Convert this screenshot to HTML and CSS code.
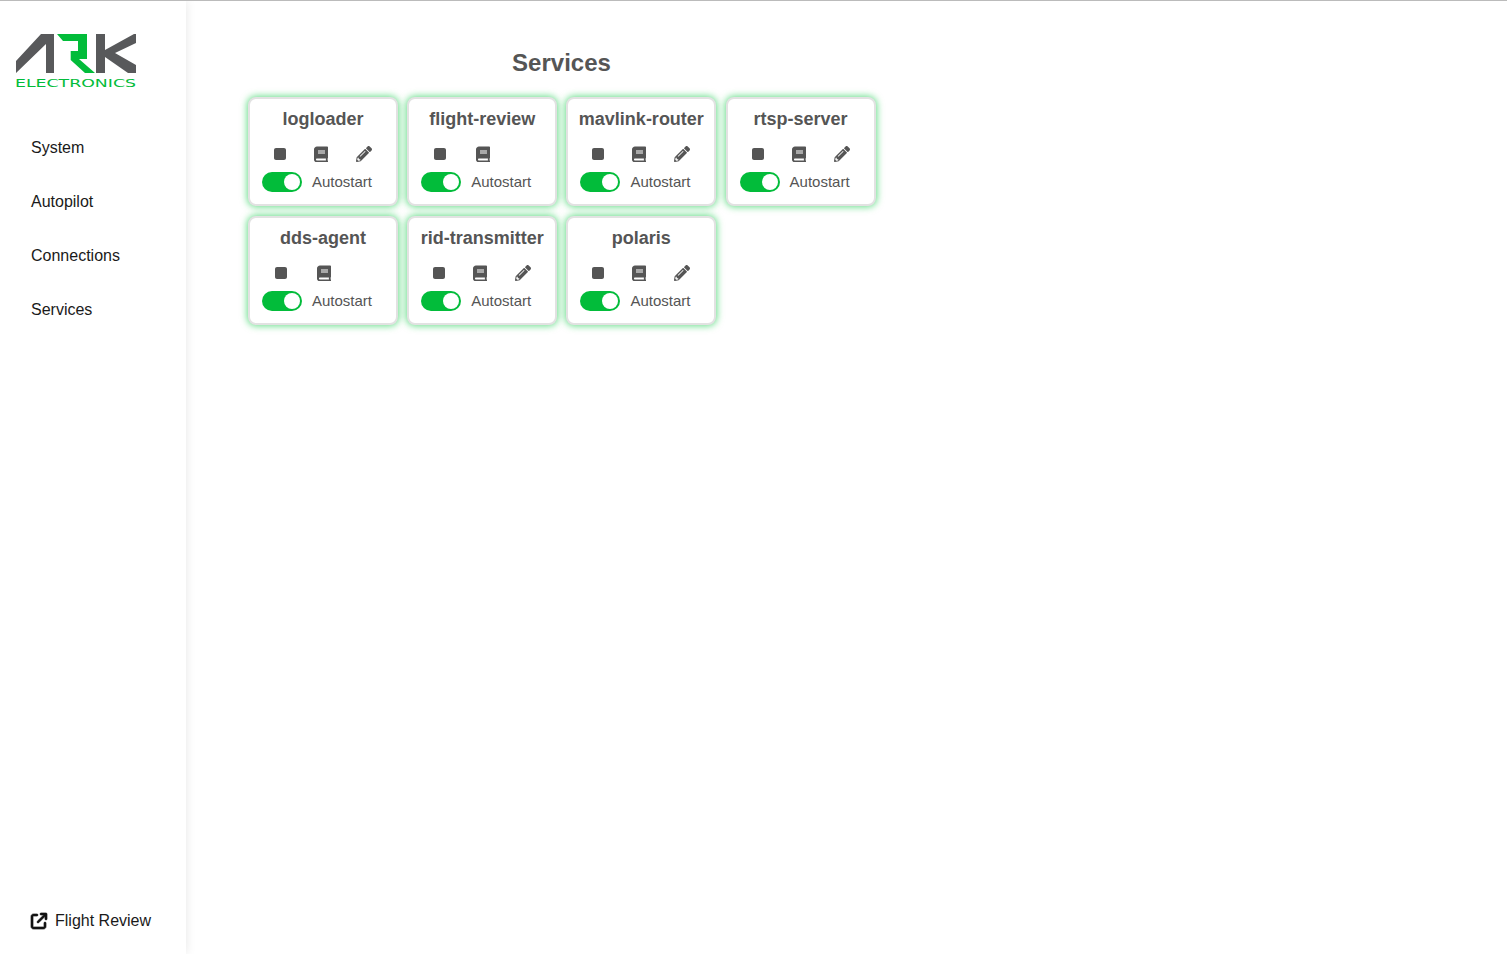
FILE: index.html
```html
<!DOCTYPE html>
<html lang="en">
<head>
    <meta charset="UTF-8">
    <title>ARK Electronics</title>
    <link rel="stylesheet" href="styles.css">
</head>
<body>
    <svg class="icon-defs" aria-hidden="true">
        <symbol id="i-stop" viewBox="0 0 384 512"><path d="M0 128C0 92.7 28.7 64 64 64H320c35.3 0 64 28.7 64 64V384c0 35.3-28.7 64-64 64H64c-35.3 0-64-28.7-64-64V128z"/></symbol>
        <symbol id="i-book" viewBox="0 -14 448 512"><path d="M448 360V24c0-13.3-10.7-24-24-24H96C43 0 0 43 0 96v320c0 53 43 96 96 96h328c13.3 0 24-10.7 24-24v-16c0-7.5-3.5-14.3-8.9-18.7-4.2-15.4-4.2-59.3 0-74.7 5.4-4.3 8.9-11.1 8.9-18.6zM128 134c0-3.3 2.7-6 6-6h212c3.3 0 6 2.7 6 6v20c0 3.3-2.7 6-6 6H134c-3.3 0-6-2.7-6-6v-20zm0 64c0-3.3 2.7-6 6-6h212c3.3 0 6 2.7 6 6v20c0 3.3-2.7 6-6 6H134c-3.3 0-6-2.7-6-6v-20zm253.4 250H96c-17.7 0-32-14.3-32-32 0-17.6 14.4-32 32-32h285.4c-1.9 17.1-1.9 46.9 0 64z"/></symbol>
        <symbol id="i-pencil" viewBox="0 0 512 512"><path d="M497.9 142.1l-46.1 46.1c-4.7 4.7-12.3 4.7-17 0l-111-111c-4.7-4.7-4.7-12.3 0-17l46.1-46.1c18.7-18.7 49.1-18.7 67.9 0l60.1 60.1c18.8 18.7 18.8 49.1 0 67.9zM284.2 99.8L21.6 362.4.4 483.9c-2.9 16.4 11.4 30.6 27.8 27.8l121.5-21.3 262.6-262.6c4.7-4.7 4.7-12.3 0-17l-111-111c-4.8-4.7-12.4-4.7-17.1 0zM124.1 339.9c-5.5-5.5-5.5-14.3 0-19.8l154-154c5.5-5.5 14.3-5.5 19.8 0s5.5 14.3 0 19.8l-154 154c-5.5 5.5-14.3 5.5-19.8 0zM88 424h48v36.3l-64.5 11.3-31.1-31.1L51.7 376H88v48z"/></symbol>
    </svg>

    <div class="app">
        <nav class="sidebar">
            <svg class="logo" viewBox="0 0 120 56" role="img" aria-label="ARK Electronics">
                <polygon class="logo-grey" points="0,27 25,0 38,0 38,39 30,39 30,10 0,39"/>
                <polygon class="logo-green" points="41,0 71,0 71,25 63,25 79,39 69,39 54.7,26 54.7,17 62,17 62,7 47,7"/>
                <polygon class="logo-grey" points="80,0 89,0 89,16 118,0 120,0 120,9 99,19 120,31 120,39 112,39 89,23 89,39 80,39"/>
                <text class="logo-text" x="-1" y="53" textLength="121" lengthAdjust="spacingAndGlyphs">ELECTRONICS</text>
            </svg>
            <ul class="nav-list">
                <li><a href="#">System</a></li>
                <li><a href="#">Autopilot</a></li>
                <li><a href="#">Connections</a></li>
                <li><a href="#">Services</a></li>
            </ul>
            <a class="nav-bottom" href="#">
                <svg class="ext-icon" viewBox="0 0 512 512"><path d="M320 0c-17.7 0-32 14.3-32 32s14.3 32 32 32h82.7L201.4 265.4c-12.5 12.5-12.5 32.8 0 45.3s32.8 12.5 45.3 0L448 109.3V192c0 17.7 14.3 32 32 32s32-14.3 32-32V32c0-17.7-14.3-32-32-32H320zM80 32C35.8 32 0 67.8 0 112V432c0 44.2 35.8 80 80 80H400c44.2 0 80-35.8 80-80V320c0-17.7-14.3-32-32-32s-32 14.3-32 32V432c0 8.8-7.2 16-16 16H80c-8.8 0-16-7.2-16-16V112c0-8.8 7.2-16 16-16H192c17.7 0 32-14.3 32-32s-14.3-32-32-32H80z"/></svg>
                <span>Flight Review</span>
            </a>
        </nav>

        <main class="content">
            <div class="services">
                <h1>Services</h1>
                <div class="card-grid">
                    <div class="card">
                        <h2>logloader</h2>
                        <div class="actions">
                            <svg class="icon icon-stop"><use href="#i-stop"/></svg>
                            <svg class="icon icon-book"><use href="#i-book"/></svg>
                            <svg class="icon icon-pencil"><use href="#i-pencil"/></svg>
                        </div>
                        <div class="autostart"><span class="toggle"></span><span class="label">Autostart</span></div>
                    </div>
                    <div class="card">
                        <h2>flight-review</h2>
                        <div class="actions">
                            <svg class="icon icon-stop"><use href="#i-stop"/></svg>
                            <svg class="icon icon-book"><use href="#i-book"/></svg>
                            <span class="no-edit"></span>
                        </div>
                        <div class="autostart"><span class="toggle"></span><span class="label">Autostart</span></div>
                    </div>
                    <div class="card">
                        <h2>mavlink-router</h2>
                        <div class="actions">
                            <svg class="icon icon-stop"><use href="#i-stop"/></svg>
                            <svg class="icon icon-book"><use href="#i-book"/></svg>
                            <svg class="icon icon-pencil"><use href="#i-pencil"/></svg>
                        </div>
                        <div class="autostart"><span class="toggle"></span><span class="label">Autostart</span></div>
                    </div>
                    <div class="card">
                        <h2>rtsp-server</h2>
                        <div class="actions">
                            <svg class="icon icon-stop"><use href="#i-stop"/></svg>
                            <svg class="icon icon-book"><use href="#i-book"/></svg>
                            <svg class="icon icon-pencil"><use href="#i-pencil"/></svg>
                        </div>
                        <div class="autostart"><span class="toggle"></span><span class="label">Autostart</span></div>
                    </div>
                    <div class="card">
                        <h2>dds-agent</h2>
                        <div class="actions">
                            <svg class="icon icon-stop"><use href="#i-stop"/></svg>
                            <svg class="icon icon-book"><use href="#i-book"/></svg>
                            <span class="no-edit"></span>
                        </div>
                        <div class="autostart"><span class="toggle"></span><span class="label">Autostart</span></div>
                    </div>
                    <div class="card">
                        <h2>rid-transmitter</h2>
                        <div class="actions">
                            <svg class="icon icon-stop"><use href="#i-stop"/></svg>
                            <svg class="icon icon-book"><use href="#i-book"/></svg>
                            <svg class="icon icon-pencil"><use href="#i-pencil"/></svg>
                        </div>
                        <div class="autostart"><span class="toggle"></span><span class="label">Autostart</span></div>
                    </div>
                    <div class="card">
                        <h2>polaris</h2>
                        <div class="actions">
                            <svg class="icon icon-stop"><use href="#i-stop"/></svg>
                            <svg class="icon icon-book"><use href="#i-book"/></svg>
                            <svg class="icon icon-pencil"><use href="#i-pencil"/></svg>
                        </div>
                        <div class="autostart"><span class="toggle"></span><span class="label">Autostart</span></div>
                    </div>
                </div>
            </div>
        </main>
    </div>
</body>
</html>
```

FILE: styles.css
```css
/* Reset default margin and set the base font */
body {
    margin: 0;
    font-family: "Liberation Sans", Arial, sans-serif;
    color: #555;
    background: #fff;
}

.icon-defs {
    display: none;
}

.app {
    display: flex;
    height: 954px;
    box-sizing: border-box;
    border-top: 1px solid #bbb;
    overflow: hidden;
}

/* Sidebar */
.sidebar {
    width: 186px;
    flex-shrink: 0;
    display: flex;
    flex-direction: column;
    box-shadow: 0 0 10px rgba(0, 0, 0, 0.1);
    padding: 33px 0 0 16px;
    box-sizing: border-box;
}

.logo {
    width: 120px;
    height: 56px;
    display: block;
    overflow: visible;
}

.logo-grey {
    fill: #58595b;
}

.logo-green {
    fill: #02bc3a;
}

.logo-text {
    fill: #02bc3a;
    font-size: 11px;
    font-family: "DejaVu Sans", sans-serif;
}

.nav-list {
    list-style: none;
    margin: 31px 0 0;
    padding: 0 0 0 15px;
    flex: 1;
}

.nav-list li {
    height: 54px;
    line-height: 54px;
}

.nav-list a,
.nav-bottom {
    color: #1a1a1a;
    text-decoration: none;
    font-size: 16px;
}

.nav-bottom {
    display: flex;
    align-items: center;
    gap: 8px;
    padding: 0 0 24px 15px;
    line-height: 18px;
}

.ext-icon {
    width: 16px;
    height: 16px;
    fill: #111;
    stroke: #111;
    stroke-width: 22;
    overflow: visible;
}

/* Main area */
.content {
    flex: 1;
    padding: 46px 0 0 62px;
}

.services {
    width: 628px;
}

h1 {
    margin: 0 0 18px;
    padding-right: 1px;
    font-size: 24px;
    line-height: 32px;
    text-align: center;
    color: #555;
}

.card-grid {
    display: flex;
    flex-wrap: wrap;
    gap: 10px 9.2px;
}

/* Service cards */
.card {
    width: 150px;
    height: 109px;
    box-sizing: border-box;
    border: 2px solid #e2e2e2;
    border-radius: 8px;
    background: #fff;
    box-shadow: 0 0 7px 1px rgba(2, 200, 60, 0.6);
    padding: 9px 10px 0;
}

h2 {
    margin: 0;
    font-size: 18px;
    line-height: 22px;
    text-align: center;
    white-space: nowrap;
    color: #555;
}

.actions {
    display: flex;
    justify-content: space-around;
    align-items: center;
    height: 16px;
    margin-top: 16px;
}

.icon {
    height: 16px;
    fill: #555;
}

.icon-stop {
    width: 12px;
}

.icon-book {
    width: 14px;
}

.icon-pencil {
    width: 16px;
}

.no-edit {
    width: 10px;
}

.autostart {
    display: flex;
    align-items: center;
    gap: 10px;
    margin-top: 10px;
    padding-left: 2px;
    font-size: 15px;
}

.label {
    margin-bottom: 2px;
}

.toggle {
    position: relative;
    width: 40px;
    height: 20px;
    border-radius: 10px;
    background: #02bc3a;
}

/* Toggle knob sits over the track */
.toggle::after {
    content: "";
    position: absolute;
    top: 2px;
    right: 2px;
    width: 16px;
    height: 16px;
    border-radius: 50%;
    background: #fff;
}
```
